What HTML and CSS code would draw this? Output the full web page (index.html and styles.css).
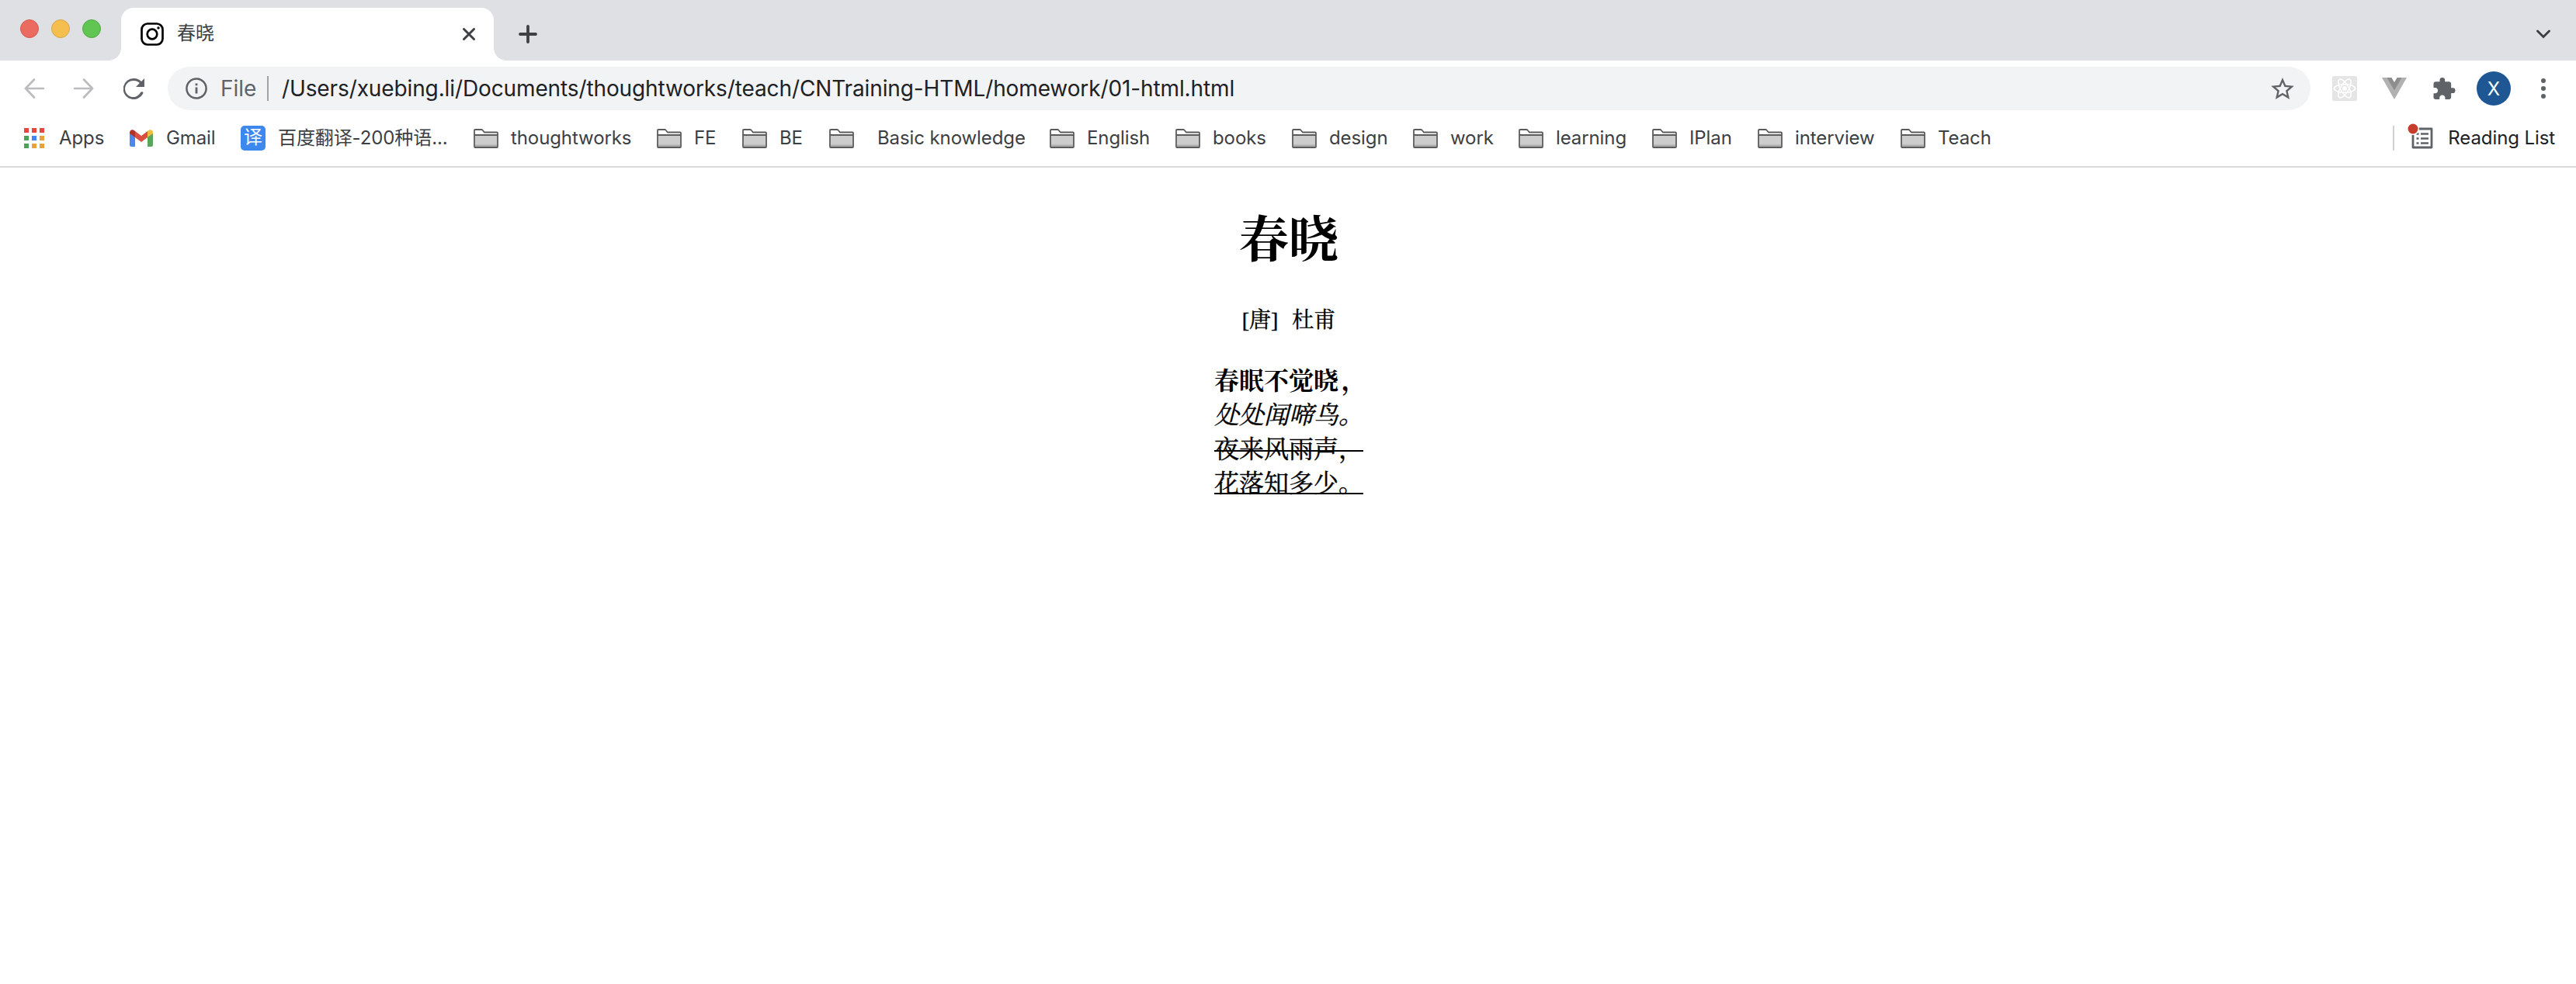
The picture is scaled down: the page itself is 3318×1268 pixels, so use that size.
FILE: index.html
```
<!DOCTYPE html>
<html lang="zh-CN">
<head>
<meta charset="utf-8">
<title>春晓</title>
<link rel="stylesheet" href="styles.css">
</head>
<body>
<svg class="defs" width="0" height="0">
  <symbol id="folder" viewBox="0 0 32 25">
    <path d="M1 23V2q0-1 1-1h8q1 0 1.600.8L14 4.500h16q1 0 1 1V23q0 1-1 1H2q-1 0-1-1z" fill="#fff" stroke="#5b5b5b" stroke-width="1.800"/>
    <path d="M2 8h28v13H2z" fill="#cdcdcd"/><path d="M2 20.500h28v3H2z" fill="#adadad"/>
    <path d="M1 8h30M2 24h28" stroke="#5b5b5b" stroke-width="1.900"/>
  </symbol>
</svg>
<header class="browser">
  <div class="tabstrip">
    <div class="lights"><i class="red"></i><i class="yellow"></i><i class="green"></i></div>
    <div class="tab">
      <svg class="favicon" viewBox="0 0 30 30" fill="none" stroke="#000"><rect x="1.500" y="1.500" width="27" height="27" rx="7.500" stroke-width="2.700"/><circle cx="15" cy="15" r="6.300" stroke-width="2.700"/><circle cx="23" cy="7" r="1.700" fill="#000" stroke="none"/></svg>
      <span class="tab-title">春晓</span>
      <svg class="close" viewBox="0 0 16 16"><path d="M1.500 1.500l13 13M14.500 1.500l-13 13" stroke="#3c4043" stroke-width="2.900" stroke-linecap="round"/></svg>
    </div>
    <svg class="plus" viewBox="0 0 24 24"><path d="M12 2v20M2 12h20" stroke="#3c4043" stroke-width="3.800" stroke-linecap="round"/></svg>
    <svg class="chevron" viewBox="0 0 18 12"><path d="M1.500 2l7.500 7.500L16.500 2" fill="none" stroke="#3c4043" stroke-width="2.900" stroke-linecap="round"/></svg>
  </div>
  <div class="toolbar">
    <svg class="nav back" viewBox="0 0 26 26"><path d="M25 13H2M13 1.500L2 13l11 11.500" fill="none" stroke="#babcbe" stroke-width="2.700" stroke-linecap="round"/></svg>
    <svg class="nav forward" viewBox="0 0 26 26"><path d="M1 13h23M13 1.500L24 13 13 24.500" fill="none" stroke="#babcbe" stroke-width="2.700" stroke-linecap="round"/></svg>
    <svg class="reload" viewBox="4 4 16 16"><path d="M17.650 6.350A7.960 7.960 0 0 0 12 4a8 8 0 1 0 7 11.500q.300-1-.600-1.300-.900-.200-1.300.500A6.250 6.250 0 1 1 12 5.750c1.750 0 3.300.690 4.400 1.850L13.500 10.500H20V4z" fill="#5f6368"/></svg>
    <div class="omnibox">
      <svg class="info" viewBox="0 0 28 28"><circle cx="14" cy="14" r="12.600" fill="none" stroke="#5f6368" stroke-width="2.500"/><path d="M12.600 12.500h2.800v8h-2.800zM12.600 7.500h2.800v2.800h-2.800z" fill="#5f6368"/></svg>
      <span class="scheme">File</span><i class="bar"></i>
      <span class="url">/Users/xuebing.li/Documents/thoughtworks/teach/CNTraining-HTML/homework/01-html.html</span>
      <svg class="star" viewBox="2 2 20 19"><path d="M22 9.240l-7.190-.620L12 2 9.190 8.630 2 9.240l5.460 4.730L5.820 21 12 17.270 18.180 21l-1.630-7.030L22 9.240zM12 15.400l-3.760 2.270 1-4.280-3.320-2.880 4.380-.380L12 6.100l1.710 4.040 4.380.380-3.320 2.880 1 4.280L12 15.400z" fill="#5f6368"/></svg>
    </div>
    <svg class="react" viewBox="0 0 32 32"><rect width="32" height="32" rx="2" fill="#e5e5e5"/><g fill="none" stroke="#fff" stroke-width="1.500"><ellipse cx="16" cy="16" rx="13.500" ry="5.200"/><ellipse cx="16" cy="16" rx="13.500" ry="5.200" transform="rotate(60 16 16)"/><ellipse cx="16" cy="16" rx="13.500" ry="5.200" transform="rotate(120 16 16)"/></g><circle cx="16" cy="16" r="3" fill="#fff"/></svg>
    <svg class="vue" viewBox="0 0 32 28"><path d="M0 0h32L16 28z" fill="#b1b1b1"/><path d="M6.500 0h6L16 6l3.500-6h6L16 16.500z" fill="#8d8d8d"/><path d="M12.500 0h7L16 6z" fill="#fff"/></svg>
    <svg class="puzzle" viewBox="2 1 21 21"><path d="M20.500 11H19V7c0-1.100-.9-2-2-2h-4V3.500a2.500 2.500 0 0 0-5 0V5H4c-1.100 0-1.990.9-1.990 2v3.800H3.500c1.490 0 2.700 1.210 2.700 2.700s-1.210 2.700-2.700 2.700H2V20c0 1.100.9 2 2 2h3.800v-1.500c0-1.490 1.210-2.700 2.700-2.700s2.700 1.210 2.700 2.700V22H17c1.100 0 2-.9 2-2v-4h1.500a2.500 2.500 0 0 0 0-5z" fill="#5f6368"/></svg>
    <span class="avatar">X</span>
    <svg class="more" viewBox="0 0 6 26" fill="#5f6368"><circle cx="3" cy="3" r="3"/><circle cx="3" cy="13" r="3"/><circle cx="3" cy="23" r="3"/></svg>
  </div>
  <nav class="bookmarks">
    <a class="bm apps"><svg class="grid" viewBox="0 0 26 26"><g fill="#e8453c"><path d="M0 0h6v6H0zM10 0h6v6h-6zM20 0h6v6h-6z"/></g><path d="M0 10h6v6H0zM0 20h6v6H0z" fill="#4f9f5b"/><path d="M10 10h6v6h-6z" fill="#4285f4"/><path d="M20 10h6v6h-6zM10 20h6v6h-6zM20 20h6v6h-6z" fill="#e9a23b"/></svg><span>Apps</span></a>
    <a class="bm gmail"><svg class="m" viewBox="0 0 30 22"><path d="M0 4l7 5v13H2q-2 0-2-2z" fill="#4f86ec"/><path d="M30 4l-7 5v13h5q2 0 2-2z" fill="#58a55c"/><path d="M7 2l8 6 8-6v8l-8 6-8-6z" fill="#d95040"/><path d="M0 4C0 0 4-1 7 2v8L0 5z" fill="#b0342a"/><path d="M30 4c0-4-4-5-7-2v8l7-5z" fill="#f2bd42"/></svg><span>Gmail</span></a>
    <a class="bm fanyi"><b>译</b><span>百度翻译-200种语...</span></a>
    <a class="bm f1"><svg class="folder"><use href="#folder"/></svg><span>thoughtworks</span></a>
    <a class="bm f2"><svg class="folder"><use href="#folder"/></svg><span>FE</span></a>
    <a class="bm f3"><svg class="folder"><use href="#folder"/></svg><span>BE</span></a>
    <a class="bm f4"><svg class="folder"><use href="#folder"/></svg><span>Basic knowledge</span></a>
    <a class="bm f5"><svg class="folder"><use href="#folder"/></svg><span>English</span></a>
    <a class="bm f6"><svg class="folder"><use href="#folder"/></svg><span>books</span></a>
    <a class="bm f7"><svg class="folder"><use href="#folder"/></svg><span>design</span></a>
    <a class="bm f8"><svg class="folder"><use href="#folder"/></svg><span>work</span></a>
    <a class="bm f9"><svg class="folder"><use href="#folder"/></svg><span>learning</span></a>
    <a class="bm f10"><svg class="folder"><use href="#folder"/></svg><span>IPlan</span></a>
    <a class="bm f11"><svg class="folder"><use href="#folder"/></svg><span>interview</span></a>
    <a class="bm f12"><svg class="folder"><use href="#folder"/></svg><span>Teach</span></a>
    <div class="reading"><svg viewBox="0 0 34 34"><path d="M7 7h24v24H7z" fill="none" stroke="#5f6368" stroke-width="2.800" stroke-linejoin="round"/><path d="M17 13.500h10M17 19.500h10M17 25.500h10M11.500 13.500h3M11.500 19.500h3M11.500 25.500h3" stroke="#5f6368" stroke-width="2.700"/><circle cx="7" cy="7" r="8" fill="#fff"/><circle cx="7" cy="7" r="6.500" fill="#c83c2c"/></svg><span>Reading List</span></div>
  </nav>
</header>
<main class="poem">
  <h1>春晓</h1>
  <p class="author"><span>[唐]</span><span>杜甫</span></p>
  <div class="verses">
    <p><strong>春眠不觉晓<span class="comma">，</span></strong></p>
    <p><em>处处闻啼鸟。</em></p>
    <p><del>夜来风雨声，</del></p>
    <p><ins>花落知多少。</ins></p>
  </div>
</main>
</body>
</html>
```
FILE: styles.css
```
* { box-sizing: border-box; }
body { margin: 0; background: #fff; color: #000; font-family: Inter, "Noto Sans CJK SC", sans-serif; }
svg { display: block; flex: none; }
.defs { position: absolute; }
.browser { height: 216px; border-bottom: 2px solid #dadada; }

.tabstrip { display: flex; align-items: center; height: 78px; padding-top: 10px; background: #dee0e4; }
.lights { display: flex; gap: 16px; margin: -14px 26px 0; }
.lights i { width: 24px; height: 24px; border-radius: 50%; }
.red { background: #ec6b60; border: 1px solid #d9594f; }
.yellow { background: #f5bf4f; border: 1px solid #dba445; }
.green { background: #61c554; border: 1px solid #4eaa42; }
.tab { position: relative; display: flex; align-items: center; width: 480px; height: 68px; padding: 0 24px 0 25px; border-radius: 16px 16px 0 0; background: #fff; }
.tab::before, .tab::after { content: ""; position: absolute; bottom: 0; width: 16px; height: 16px; }
.tab::before { left: -16px; background: radial-gradient(circle at 0 0, transparent 15.500px, #fff 16px); }
.tab::after { right: -16px; background: radial-gradient(circle at 100% 0, transparent 15.500px, #fff 16px); }
.favicon { width: 30px; height: 30px; margin-right: 17px; }
.tab-title { flex: 1; margin-top: -2px; font-size: 24px; line-height: 30px; color: #3c4043; }
.close { width: 16px; height: 16px; }
.plus { width: 24px; height: 24px; margin-left: 32px; }
.chevron { width: 18px; height: 12px; margin: 0 33px 0 auto; }

.toolbar { display: flex; align-items: center; height: 72px; padding: 0 39px 0 31px; }
.nav { width: 26px; height: 26px; }
.forward { margin-left: 38px; }
.reload { width: 27px; height: 27px; margin-left: 38px; }
.omnibox { display: flex; align-items: center; width: 2760px; height: 56px; margin: 0 28px 0 30px; padding: 0 21px 0 23px; border-radius: 28px; background: #f1f3f4; font-size: 28px; line-height: 34px; color: #202124; }
.info { width: 28px; height: 28px; }
.scheme { width: 60px; margin-left: 17px; color: #5f6368; }
.bar { width: 2px; height: 32px; background: #a2a5a8; }
.url { flex: 1; margin-left: 17px; white-space: nowrap; letter-spacing: -.115px; }
.star { width: 30px; height: 28px; }
.react { width: 32px; height: 32px; }
.vue { width: 32px; height: 28px; margin-left: 32px; }
.puzzle { width: 29px; height: 28px; margin-left: 34px; }
.avatar { display: grid; place-items: center; width: 44px; height: 44px; margin: 0 39px 0 27px; border-radius: 50%; background: #1f5795; color: #fff; font-size: 24px; }
.more { width: 6px; height: 26px; }

.bookmarks { display: flex; height: 64px; padding: 0 27px 8px 31px; align-items: center; font-size: 24px; line-height: 30px; color: #3c4043; letter-spacing: -.1px; }
.bm { display: flex; align-items: center; white-space: nowrap; }
.bm svg, .bm b { margin-right: 16px; }
.folder { width: 32px; height: 25px; }
.apps { width: 136px; }
.grid { width: 26px; height: 26px; }
.bm .grid { margin-right: 19px; }
.gmail { width: 143px; }
.m { width: 30px; height: 22px; }
.bm .m { margin-right: 17px; }
.fanyi { width: 300px; }
.fanyi b { width: 32px; height: 32px; border-radius: 5px; background: #3c88ee; color: #fff; font-weight: 400; text-align: center; }
.f1 { width: 236px; }
.f2 { width: 110px; }
.f3 { width: 112px; }
.f4 { width: 284px; }
.bm.f4 svg { margin-right: 30px; }
.f5 { width: 162px; }
.f6 { width: 150px; }
.f7 { width: 156px; }
.f8 { width: 136px; }
.f9 { width: 172px; }
.f10 { width: 136px; }
.f11 { width: 184px; }
.f12 { width: 120px; }
.reading { display: flex; align-items: center; height: 32px; margin-left: auto; padding-left: 17px; border-left: 2px solid #cfd1d3; color: #202124; white-space: nowrap; }
.reading svg { width: 34px; height: 34px; margin: -4px 18px 0 0; }

.poem { display: flex; flex-direction: column; align-items: center; padding-left: 2px; font-family: "Songti SC", "Liberation Serif", "Noto Serif CJK SC", "Noto Sans CJK SC", serif; -webkit-text-stroke: .4px #000; }
.poem h1 { margin: 47px 0 0; font-size: 64px; line-height: 94px; -webkit-text-stroke: 0; }
.author { display: flex; gap: 18px; margin: 36px 0 0; font-size: 28px; line-height: 40px; }
.verses { margin-top: 36px; font-size: 32px; }
.verses p { margin: 0; line-height: 44px; white-space: nowrap; }
.verses strong { -webkit-text-stroke: 0; }
.comma { padding-left: 4px; margin-right: -4px; }
.verses del { text-decoration: none; background: linear-gradient(#000, #000) 0 56% / 100% 2px no-repeat; }
.verses ins { text-decoration-thickness: 2px; text-underline-offset: 1px; text-decoration-skip-ink: none; }
```
